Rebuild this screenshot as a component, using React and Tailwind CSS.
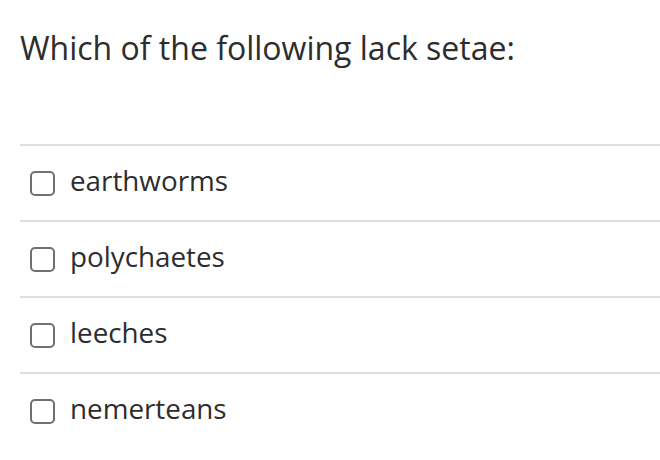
import React, { useState } from "react";

const options = ["earthworms", "polychaetes", "leeches", "nemerteans"];

export default function App() {
  const [checked, setChecked] = useState({});

  return (
    <div className="min-h-screen bg-white px-5 pt-[25px] text-[#2d2d2d] font-['Open_Sans',sans-serif]">
      <h1 className="text-[32px] leading-[46px] font-normal">Which of the following lack setae:</h1>
      <ul className="mt-[73px] mr-[-20px]">
        {options.map((opt) => (
          <li key={opt} className="border-t-2 border-[#e0e0e0]">
            <label className="flex h-[74px] items-center gap-[15px] pl-[10px]">
              <input
                type="checkbox"
                checked={!!checked[opt]}
                onChange={() => setChecked((prev) => ({ ...prev, [opt]: !prev[opt] }))}
                className="h-[25px] w-[25px] appearance-none rounded-[5px] border-2 border-[#707070] bg-white"
              />
              <span className="text-[27.8px] leading-[34px] -mt-[6px]">{opt}</span>
            </label>
          </li>
        ))}
      </ul>
    </div>
  );
}
